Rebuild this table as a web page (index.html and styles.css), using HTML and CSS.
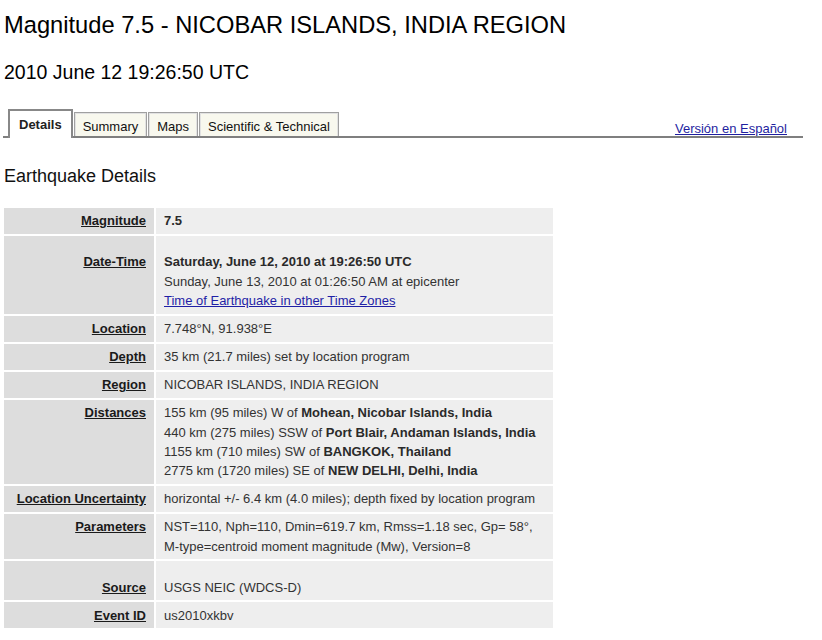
FILE: index.html
```html
<!DOCTYPE html>
<html lang="en">
<head>
  <meta charset="UTF-8">
  <title>Magnitude 7.5 - NICOBAR ISLANDS, INDIA REGION</title>
  <link rel="stylesheet" href="styles.css">
</head>
<body>

<div class="page">
  <h1>Magnitude 7.5 - NICOBAR ISLANDS, INDIA REGION</h1>
  <h2>2010 June 12 19:26:50 UTC</h2>

  <div class="tabs">
    <span class="tab active">Details</span>
    <span class="tab">Summary</span>
    <span class="tab">Maps</span>
    <span class="tab">Scientific &amp; Technical</span>
    <a class="lang" href="#">Versión en Español</a>
  </div>

  <h3>Earthquake Details</h3>

  <table class="details">
    <tr>
      <th><a href="#">Magnitude</a></th>
      <td><b>7.5</b></td>
    </tr>
    <tr>
      <th><a href="#">Date-Time</a></th>
      <td class="spaced">
        <b>Saturday, June 12, 2010 at 19:26:50 UTC</b><br>
        Sunday, June 13, 2010 at 01:26:50 AM at epicenter<br>
        <a class="link" href="#">Time of Earthquake in other Time Zones</a>
      </td>
    </tr>
    <tr>
      <th><a href="#">Location</a></th>
      <td>7.748&deg;N, 91.938&deg;E</td>
    </tr>
    <tr>
      <th><a href="#">Depth</a></th>
      <td>35 km (21.7 miles) set by location program</td>
    </tr>
    <tr>
      <th><a href="#">Region</a></th>
      <td>NICOBAR ISLANDS, INDIA REGION</td>
    </tr>
    <tr>
      <th><a href="#">Distances</a></th>
      <td>
        155 km (95 miles) W of <b>Mohean, Nicobar Islands, India</b><br>
        440 km (275 miles) SSW of <b>Port Blair, Andaman Islands, India</b><br>
        1155 km (710 miles) SW of <b>BANGKOK, Thailand</b><br>
        2775 km (1720 miles) SE of <b>NEW DELHI, Delhi, India</b>
      </td>
    </tr>
    <tr>
      <th><a href="#">Location Uncertainty</a></th>
      <td>horizontal +/- 6.4 km (4.0 miles); depth fixed by location program</td>
    </tr>
    <tr>
      <th><a href="#">Parameters</a></th>
      <td>
        NST=110, Nph=110, Dmin=619.7 km, Rmss=1.18 sec, Gp= 58&deg;,<br>
        M-type=centroid moment magnitude (Mw), Version=8
      </td>
    </tr>
    <tr>
      <th><a href="#">Source</a></th>
      <td class="spaced">USGS NEIC (WDCS-D)</td>
    </tr>
    <tr>
      <th><a href="#">Event ID</a></th>
      <td>us2010xkbv</td>
    </tr>
  </table>
</div>

</body>
</html>
```

FILE: styles.css
```css
body {
  font-family: "Liberation Sans", Arial, sans-serif;
  margin: 0;
  color: #000;
  background: #fff;
}

.page {
  padding-left: 4px;
}

h1 {
  font-size: 23.7px;
  font-weight: normal;
  line-height: 28px;
  margin: 11px 0 0;
}

h2 {
  font-size: 19.5px;
  font-weight: normal;
  line-height: 24px;
  margin: 21px 0 0;
}

h3 {
  font-size: 18px;
  font-weight: normal;
  line-height: 22px;
  margin: 27px 0 0;
  color: #111;
}

.tabs {
  display: flex;
  align-items: flex-end;
  margin: 25px 19px 0 -1px;
  border-bottom: 2px solid #7f7f7f;
  font-size: 13px;
  line-height: 15px;
}

.tab {
  border: 1px solid #a0a0a0;
  border-bottom: none;
  box-shadow: inset 1px 1px 0 #e2e2e2, inset -1px 0 0 #e2e2e2;
  background: #f8f8ee;
  padding: 6px 8px 2px;
  margin-left: 1px;
  color: #111;
}

.tab.active {
  border: 2px solid #888;
  border-bottom: none;
  box-shadow: none;
  background: #fff;
  font-weight: bold;
  padding: 6px 9px;
  margin: 0 0 -2px 5px;
  color: #222;
}

.lang {
  margin-left: auto;
  margin-right: 16px;
  color: #1f1f9f;
}

table.details {
  margin: 19px 0 0 -2px;
  border-spacing: 2px;
  width: 553px;
  font-size: 13px;
  line-height: 19.4px;
}

table.details th,
table.details td {
  vertical-align: baseline;
  padding: 3.3px 8px;
}

table.details th {
  width: 142px;
  padding-left: 0;
  text-align: right;
  background: #dddddd;
}

table.details th a {
  color: #1a1a1a;
  text-decoration: underline;
}

table.details td {
  background: #eeeeee;
  color: #333;
}

table.details td b {
  color: #2a2a2a;
}

table.details td.spaced {
  padding-top: 16.3px;
}

.link {
  color: #1f1fa6;
}
```
